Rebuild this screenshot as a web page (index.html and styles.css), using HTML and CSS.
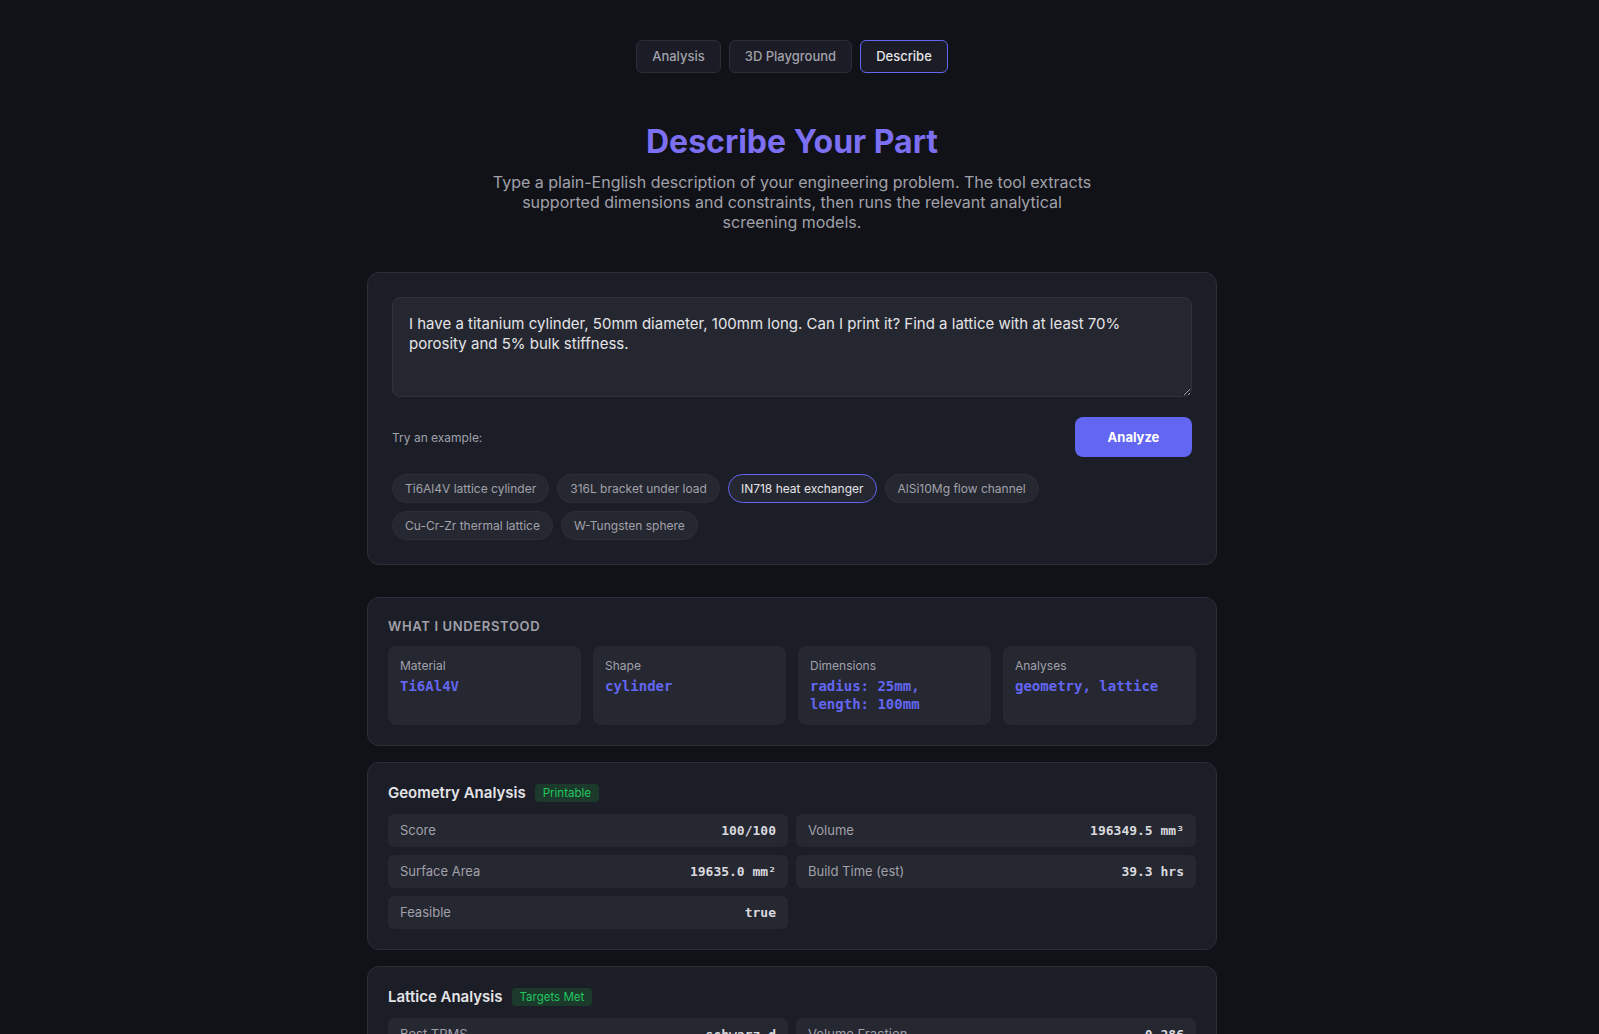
FILE: index.html
```html
<!DOCTYPE html>
<html lang="en">
<head>
    <meta charset="UTF-8">
    <meta name="viewport" content="width=device-width, initial-scale=1.0">
    <title>Describe Your Part</title>
    <link rel="stylesheet" href="styles.css">
</head>
<body>
    <div class="page">
        <nav class="tabs">
            <button class="tab">Analysis</button>
            <button class="tab">3D Playground</button>
            <button class="tab active">Describe</button>
        </nav>

        <header class="intro">
            <h1>Describe Your Part</h1>
            <p>Type a plain-English description of your engineering problem. The tool extracts supported dimensions and constraints, then runs the relevant analytical screening models.</p>
        </header>

        <section class="card input-card">
            <textarea class="prompt">I have a titanium cylinder, 50mm diameter, 100mm long. Can I print it? Find a lattice with at least 70% porosity and 5% bulk stiffness.</textarea>
            <div class="actions">
                <span class="hint">Try an example:</span>
                <button class="analyze">Analyze</button>
            </div>
            <div class="chips">
                <button class="chip">Ti6Al4V lattice cylinder</button>
                <button class="chip">316L bracket under load</button>
                <button class="chip active">IN718 heat exchanger</button>
                <button class="chip">AlSi10Mg flow channel</button>
                <button class="chip">Cu-Cr-Zr thermal lattice</button>
                <button class="chip">W-Tungsten sphere</button>
            </div>
        </section>

        <section class="card result">
            <h3 class="section-label">What I Understood</h3>
            <div class="parsed">
                <div class="parsed-item">
                    <div class="parsed-key">Material</div>
                    <div class="parsed-val">Ti6Al4V</div>
                </div>
                <div class="parsed-item">
                    <div class="parsed-key">Shape</div>
                    <div class="parsed-val">cylinder</div>
                </div>
                <div class="parsed-item">
                    <div class="parsed-key">Dimensions</div>
                    <div class="parsed-val">radius: 25mm,<br>length: 100mm</div>
                </div>
                <div class="parsed-item">
                    <div class="parsed-key">Analyses</div>
                    <div class="parsed-val">geometry, lattice</div>
                </div>
            </div>
        </section>

        <section class="card result">
            <div class="result-head">
                <h2>Geometry Analysis</h2>
                <span class="badge">Printable</span>
            </div>
            <div class="stats">
                <div class="stat"><span>Score</span><b>100/100</b></div>
                <div class="stat"><span>Volume</span><b>196349.5 mm³</b></div>
                <div class="stat"><span>Surface Area</span><b>19635.0 mm²</b></div>
                <div class="stat"><span>Build Time (est)</span><b>39.3 hrs</b></div>
                <div class="stat"><span>Feasible</span><b>true</b></div>
            </div>
        </section>

        <section class="card result">
            <div class="result-head">
                <h2>Lattice Analysis</h2>
                <span class="badge">Targets Met</span>
            </div>
            <div class="stats">
                <div class="stat"><span>Best TPMS</span><b>schwarz_d</b></div>
                <div class="stat"><span>Volume Fraction</span><b>0.286</b></div>
                <div class="stat"><span>Porosity</span><b>71.4%</b></div>
                <div class="stat"><span>Relative Stiffness</span><b>5.2%</b></div>
                <div class="stat"><span>Cell Size</span><b>5.0 mm</b></div>
                <div class="stat"><span>Min Wall</span><b>0.62 mm</b></div>
            </div>
        </section>
    </div>
</body>
</html>
```

FILE: styles.css
```css
body {
    margin: 0;
    padding-right: 15px;
    background: #111218;
    color: #e4e4e7;
    font-family: Inter, "Noto Sans", sans-serif;
}
.page {
    width: 850px;
    margin: 0 auto;
    padding: 40px 0 64px;
}
button {
    font-family: inherit;
}
.tabs {
    display: flex;
    justify-content: center;
    gap: 8px;
    margin-bottom: 49px;
}
.tab {
    background: #1b1c25;
    color: #a1a1aa;
    border: 1px solid #2c2d37;
    border-radius: 6px;
    font-size: 13px;
    font-weight: 500;
    line-height: 17px;
    padding: 7px 15px;
}
.tab.active {
    border-color: #6366f1;
    color: #e4e4e7;
}
.intro {
    text-align: center;
    margin-bottom: 40px;
}
.intro h1 {
    margin: 0 0 11px;
    font-size: 32px;
    font-weight: 700;
    color: #7c6ff1;
}
.intro p {
    margin: 0 auto;
    max-width: 600px;
    font-size: 16px;
    line-height: 20px;
    color: #a1a1aa;
}
.card {
    background: #1b1d27;
    border: 1px solid #2c2e38;
    border-radius: 12px;
    margin-bottom: 16px;
}
.input-card {
    padding: 24px;
    margin-bottom: 32px;
}
.prompt {
    display: block;
    box-sizing: border-box;
    width: 100%;
    height: 100px;
    resize: vertical;
    background: #252730;
    border: 1px solid #2f313b;
    border-radius: 8px;
    padding: 16px;
    color: #e4e4e7;
    font-family: inherit;
    font-size: 15px;
    line-height: 20px;
}
.actions {
    display: flex;
    justify-content: space-between;
    align-items: center;
    margin-top: 20px;
}
.hint {
    font-size: 12px;
    color: #a1a1aa;
}
.analyze {
    background: #6366f1;
    color: #ffffff;
    border: none;
    border-radius: 8px;
    font-size: 13px;
    font-weight: 700;
    width: 117px;
    height: 40px;
}
.chips {
    display: flex;
    flex-wrap: wrap;
    gap: 8px;
    margin-top: 17px;
}
.chip {
    background: #262831;
    border: 1px solid #2c2e38;
    border-radius: 999px;
    color: #a1a1aa;
    font-size: 12px;
    line-height: 15px;
    padding: 6px 12px;
}
.chip.active {
    border-color: #6366f1;
    color: #e4e4e7;
}
.result {
    padding: 20px;
}
.section-label {
    margin: 0 0 12px;
    font-size: 13px;
    font-weight: 600;
    letter-spacing: 0.05em;
    text-transform: uppercase;
    color: #a1a1aa;
}
.parsed {
    display: grid;
    grid-template-columns: repeat(4, 1fr);
    gap: 12px;
}
.parsed-item {
    background: #252731;
    border-radius: 8px;
    padding: 12px;
}
.parsed-key {
    font-size: 12px;
    line-height: 15px;
    color: #a1a1aa;
    margin-bottom: 4px;
}
.parsed-val {
    font-family: "DejaVu Sans Mono", "Liberation Mono", monospace;
    font-size: 14px;
    line-height: 18px;
    font-weight: 700;
    color: #6366f1;
}
.result-head {
    display: flex;
    align-items: center;
    gap: 9px;
    margin-bottom: 12px;
}
.result-head h2 {
    margin: 0;
    font-size: 15px;
    font-weight: 600;
    color: #e4e4e7;
}
.badge {
    background: #1b3a2c;
    color: #22c55e;
    font-size: 11.5px;
    line-height: 14px;
    padding: 2px 8px;
    border-radius: 4px;
}
.stats {
    display: grid;
    grid-template-columns: 1fr 1fr;
    gap: 8px;
}
.stat {
    display: flex;
    justify-content: space-between;
    align-items: center;
    background: #252731;
    border-radius: 6px;
    padding: 8px 12px;
    font-size: 13px;
    line-height: 17px;
}
.stat span {
    color: #a1a1aa;
}
.stat b {
    font-family: "DejaVu Sans Mono", "Liberation Mono", monospace;
    font-weight: 700;
    color: #d9d9de;
}
```
